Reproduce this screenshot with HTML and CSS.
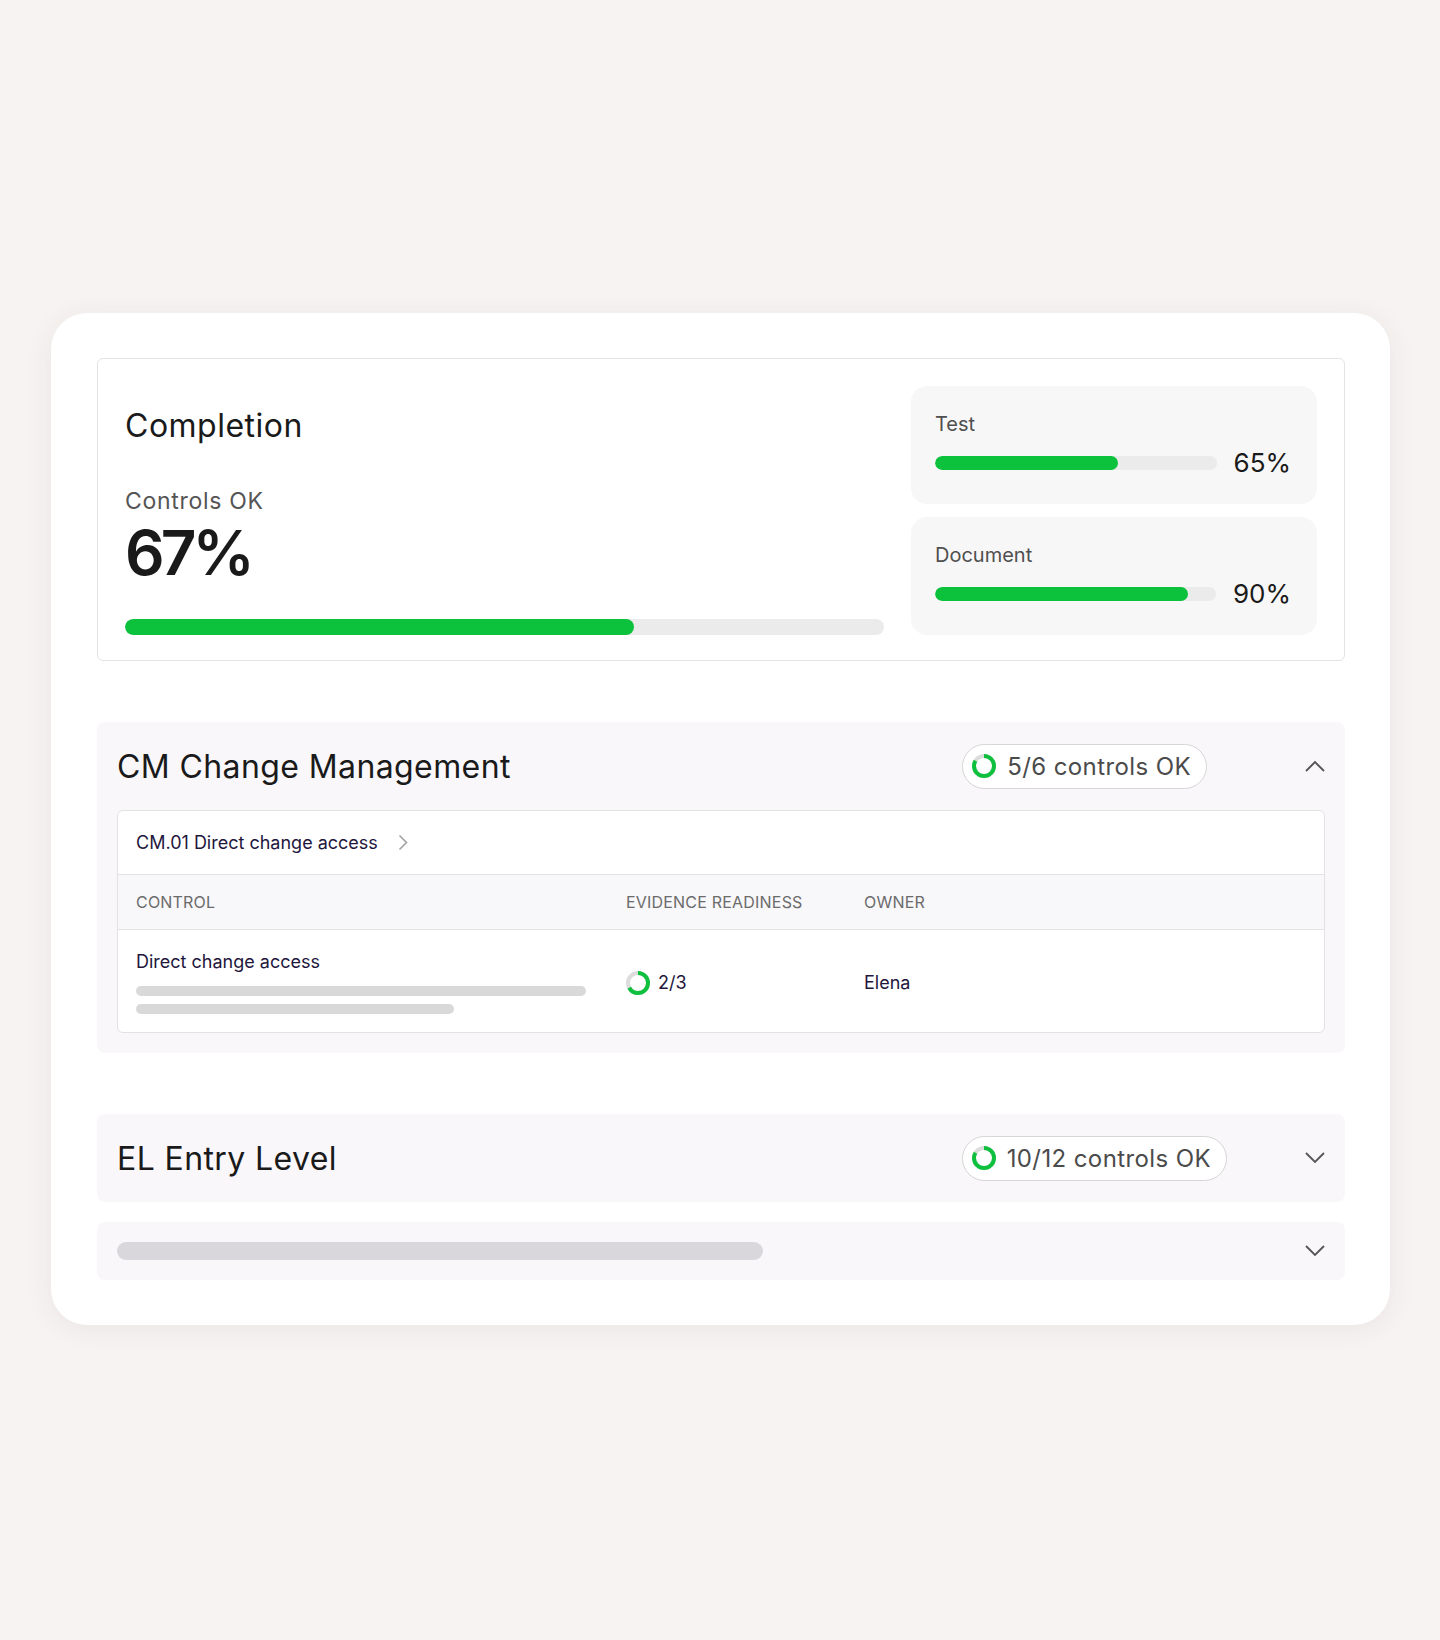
FILE: index.html
```html
<!DOCTYPE html>
<html lang="en">
<head>
  <meta charset="UTF-8" />
  <title>Completion - Controls</title>
  <link rel="stylesheet" href="styles.css">
</head>
<body>
  <div class="card">

    <!-- Completion summary -->
    <div class="completion">
      <div class="completion-main">
        <h2 class="completion-title">Completion</h2>
        <div class="completion-label">Controls OK</div>
        <div class="completion-value">67%</div>
        <div class="bar bar-big"><div class="bar-fill" style="width:67%"></div></div>
      </div>
      <div class="completion-side">
        <div class="stat">
          <div class="stat-label">Test</div>
          <div class="stat-row">
            <div class="bar bar-small"><div class="bar-fill" style="width:65%"></div></div>
            <div class="stat-value">65%</div>
          </div>
        </div>
        <div class="stat">
          <div class="stat-label">Document</div>
          <div class="stat-row">
            <div class="bar bar-small"><div class="bar-fill" style="width:90%"></div></div>
            <div class="stat-value">90%</div>
          </div>
        </div>
      </div>
    </div>

    <!-- CM section (open) -->
    <div class="section section-cm">
      <div class="section-head">
        <h3 class="section-title">CM Change Management</h3>
        <div class="badge badge-cm">
          <svg class="ring" width="24" height="24" viewBox="0 0 24 24">
            <circle cx="12" cy="12" r="10" fill="none" stroke="#dcdcdc" stroke-width="4"/>
            <circle cx="12" cy="12" r="10" fill="none" stroke="#0fc03e" stroke-width="4"
                    stroke-dasharray="52.36 62.83" transform="rotate(-90 12 12)"/>
          </svg>
          <span>5/6 controls OK</span>
        </div>
        <svg class="chevron" width="20" height="12" viewBox="0 0 20 12">
          <polyline points="1,11 10,2 19,11" fill="none" stroke="#555" stroke-width="1.8"/>
        </svg>
      </div>

      <div class="table-card">
        <div class="table-group">
          <span>CM.01 Direct change access</span>
          <svg width="10" height="17" viewBox="0 0 10 17">
            <polyline points="1.5,1.5 8.5,8.5 1.5,15.5" fill="none" stroke="#a3a3a3" stroke-width="1.6"/>
          </svg>
        </div>
        <div class="table-row table-header">
          <div>CONTROL</div>
          <div>EVIDENCE READINESS</div>
          <div>OWNER</div>
        </div>
        <div class="table-row table-data">
          <div class="control-cell">
            <div class="control-name">Direct change access</div>
            <div class="skeleton skeleton-1"></div>
            <div class="skeleton skeleton-2"></div>
          </div>
          <div class="evidence-cell">
            <svg class="ring" width="24" height="24" viewBox="0 0 24 24">
              <circle cx="12" cy="12" r="10" fill="none" stroke="#dcdcdc" stroke-width="4"/>
              <circle cx="12" cy="12" r="10" fill="none" stroke="#0fc03e" stroke-width="4"
                      stroke-dasharray="41.89 62.83" transform="rotate(-90 12 12)"/>
            </svg>
            <span>2/3</span>
          </div>
          <div class="owner-cell">Elena</div>
        </div>
      </div>
    </div>

    <!-- EL section (closed) -->
    <div class="section section-el">
      <div class="section-head">
        <h3 class="section-title">EL Entry Level</h3>
        <div class="badge badge-el">
          <svg class="ring" width="24" height="24" viewBox="0 0 24 24">
            <circle cx="12" cy="12" r="10" fill="none" stroke="#dcdcdc" stroke-width="4"/>
            <circle cx="12" cy="12" r="10" fill="none" stroke="#0fc03e" stroke-width="4"
                    stroke-dasharray="52.36 62.83" transform="rotate(-90 12 12)"/>
          </svg>
          <span>10/12 controls OK</span>
        </div>
        <svg class="chevron" width="20" height="12" viewBox="0 0 20 12">
          <polyline points="1,1 10,10 19,1" fill="none" stroke="#555" stroke-width="1.8"/>
        </svg>
      </div>
    </div>

    <!-- loading section -->
    <div class="section section-loading">
      <div class="loading-bar"></div>
      <svg class="chevron" width="20" height="12" viewBox="0 0 20 12">
        <polyline points="1,1 10,10 19,1" fill="none" stroke="#555" stroke-width="1.8"/>
      </svg>
    </div>

  </div>
</body>
</html>
```

FILE: styles.css
```css
body {
  margin: 0;
  background: #f7f3f2;
  font-family: Inter, "Noto Sans", sans-serif;
  color: #1a1a1a;
  min-height: 1640px;
}

.card {
  width: 1339px;
  box-sizing: border-box;
  margin: 313px 0 0 51px;
  padding: 45px 45px 45px 46px;
  background: #fff;
  border-radius: 36px;
  box-shadow: 0 4px 28px rgba(70, 50, 40, 0.07);
}

/* completion box */
.completion {
  display: flex;
  gap: 27px;
  padding: 27px 27px 25px 27px;
  border: 1px solid #e3e3e3;
  border-radius: 6px;
}

.completion-main {
  flex: 1;
  padding-top: 22px;
}

.completion-title {
  margin: 0;
  font-size: 32px;
  line-height: 36px;
  font-weight: 400;
  letter-spacing: 0.5px;
  color: #1a1a1a;
}

.completion-label {
  margin-top: 43px;
  font-size: 23px;
  line-height: 28px;
  letter-spacing: 0.7px;
  color: #555;
}

.completion-value {
  margin-top: 3px;
  font-size: 62px;
  line-height: 70px;
  font-weight: 600;
  letter-spacing: -4px;
}

.bar {
  background: #ebebeb;
  border-radius: 10px;
  overflow: hidden;
}

.bar-fill {
  height: 100%;
  background: #0cc23d;
  border-radius: 10px;
}

.bar-big {
  height: 16px;
  margin-top: 31px;
}

.completion-side {
  width: 406px;
  display: flex;
  flex-direction: column;
  gap: 13px;
}

.stat {
  background: #f8f7f7;
  border-radius: 16px;
  padding: 26px 26px 26px 24px;
}

.stat-label {
  font-size: 20px;
  line-height: 24px;
  color: #4f4f4f;
}

.stat-row {
  display: flex;
  align-items: center;
  gap: 17px;
  margin-top: 12px;
}

.bar-small {
  flex: 1;
  height: 14px;
}

.stat-value {
  font-size: 26px;
  line-height: 30px;
  color: #1a1a1a;
}

/* sections */
.section {
  margin-top: 61px;
  background: #f9f7fa;
  border-radius: 8px;
  padding: 0 20px 0 20px;
}

.section-cm {
  padding-bottom: 20px;
}

.section-head {
  height: 88px;
  display: flex;
  align-items: center;
}

.section-title {
  flex: 1;
  margin: 0;
  font-size: 32px;
  font-weight: 400;
  letter-spacing: 0.4px;
  color: #1a1a1a;
}

.badge {
  display: flex;
  align-items: center;
  gap: 11px;
  height: 43px;
  padding: 0 15px 0 9px;
  border: 1.5px solid #d6d6d6;
  border-radius: 24px;
  background: #fff;
  font-size: 24px;
  letter-spacing: 0.4px;
  color: #4b4b4b;
}

.badge-cm {
  margin-right: 98px;
}

.badge-el {
  margin-right: 78px;
}

.chevron {
  flex-shrink: 0;
}

.ring {
  display: block;
  flex-shrink: 0;
}

/* table */
.table-card {
  background: #fff;
  border: 1px solid #e2e2e2;
  border-radius: 6px;
  color: #23163d;
}

.table-group {
  height: 63px;
  display: flex;
  align-items: center;
  gap: 20px;
  padding-left: 18px;
  font-size: 18px;
  border-bottom: 1px solid #e4e4e4;
}

.table-row {
  display: grid;
  grid-template-columns: 490px 238px 1fr;
  padding-left: 18px;
}

.table-header {
  height: 54px;
  align-items: center;
  background: #f8f7fa;
  border-bottom: 1px solid #e4e4e4;
  font-size: 16px;
  color: #6b6b6b;
  letter-spacing: 0.2px;
}

.table-data {
  padding-top: 21px;
  padding-bottom: 18px;
  font-size: 18px;
  line-height: 22px;
}

.control-name {
  margin-bottom: 13px;
}

.skeleton {
  height: 10px;
  border-radius: 5px;
  background: #d9d9d9;
}

.skeleton-1 {
  width: 450px;
  margin-bottom: 8px;
}

.skeleton-2 {
  width: 318px;
}

.evidence-cell {
  display: flex;
  align-items: center;
  gap: 8px;
  align-self: center;
}

.owner-cell {
  align-self: center;
}

/* loading row */
.section-loading {
  margin-top: 20px;
  height: 58px;
  display: flex;
  align-items: center;
  justify-content: space-between;
}

.loading-bar {
  width: 646px;
  height: 18px;
  border-radius: 9px;
  background: #d9d7db;
}
```
